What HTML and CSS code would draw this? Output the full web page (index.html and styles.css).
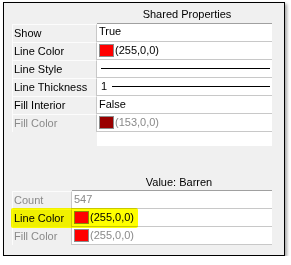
FILE: index.html
```html
<!DOCTYPE html>
<html lang="en">
<head>
    <meta charset="UTF-8">
    <title>Properties</title>
    <link rel="stylesheet" href="styles.css">
</head>
<body>
    <div class="window">
        <!-- shared properties grid -->
        <div class="grid grid-shared">
            <div class="blank"></div>
            <div class="head">Shared Properties</div>

            <div class="label">Show</div>
            <div class="value">True</div>

            <div class="label">Line Color</div>
            <div class="value"><span class="swatch red"></span>(255,0,0)</div>

            <div class="label">Line Style</div>
            <div class="value"><span class="line"></span></div>

            <div class="label">Line Thickness</div>
            <div class="value"><span class="num">1</span><span class="line"></span></div>

            <div class="label">Fill Interior</div>
            <div class="value">False</div>

            <div class="label dim">Fill Color</div>
            <div class="value dim"><span class="swatch dark"></span>(153,0,0)</div>

            <div class="blank"></div>
            <div class="rest"></div>
        </div>

        <!-- value grid -->
        <div class="grid grid-value">
            <div class="blank"></div>
            <div class="head">Value: Barren</div>

            <div class="label dim">Count</div>
            <div class="value dim">547</div>

            <div class="label">Line Color</div>
            <div class="value"><span class="swatch red"></span>(255,0,0)</div>

            <div class="label dim">Fill Color</div>
            <div class="value dim"><span class="swatch red"></span>(255,0,0)</div>

            <div class="mark"></div>
        </div>
    </div>
</body>
</html>
```

FILE: styles.css
```css
body {
    margin: 0;
    padding: 0;
    background-color: white;
    font-family: "Liberation Sans", Arial, sans-serif;
    font-size: 11px;
    color: #000;
}

.window {
    box-sizing: border-box;
    margin: 2px 0 0 3px;
    width: 282px;
    height: 254px;
    border: 1px solid #000;
    background-color: #f0f0f0;
    box-shadow: 2px 2px 3px rgba(0, 0, 0, 0.35);
    padding: 4px 0 0 8px;
}

.grid {
    display: grid;
    position: relative;
    width: 260px;
}

.grid-shared {
    grid-template-columns: 85px 175px;
    grid-template-rows: 17px repeat(6, 18px) 14px;
}

.grid-value {
    margin-top: 29px;
    grid-template-columns: 60px 200px;
    grid-template-rows: 16px repeat(3, 18px);
}

.head {
    box-sizing: border-box;
    border-bottom: 1px solid #a0a0a0;
    text-align: center;
    line-height: 15px;
}

.grid-shared .head {
    padding-left: 5px;
}

.grid-value .head {
    padding-left: 14px;
}

.label {
    box-sizing: border-box;
    border-top: 1px solid #fcfcfc;
    border-left: 1px solid #fcfcfc;
    border-right: 1px solid #c8c8c8;
    padding-left: 1px;
    line-height: 17px;
    white-space: nowrap;
}

.value {
    box-sizing: border-box;
    background-color: white;
    border-bottom: 1px solid #c8c8c8;
    padding-left: 2px;
    line-height: 15px;
    display: flex;
    align-items: center;
    white-space: nowrap;
}

.grid-shared .value:nth-child(4) {
    align-items: flex-start;
}

.dim {
    color: #8a8a8a;
}

.swatch {
    box-sizing: border-box;
    width: 15px;
    height: 13px;
    margin-right: 1px;
    border: 1px solid #8c8c8c;
}

.swatch.red {
    background-color: #ff0000;
}

.swatch.dark {
    background-color: #990000;
}

.line {
    flex: 1;
    height: 1px;
    margin: 0 2px 0 2px;
    background-color: #000;
}

.num {
    margin-left: 2px;
    margin-right: 3px;
}

.rest {
    background-color: white;
}

/* yellow marker over the Line Color row */
.mark {
    position: absolute;
    left: -1px;
    top: 33px;
    width: 127px;
    height: 20px;
    border-radius: 2px;
    background-color: #ffff00;
    mix-blend-mode: multiply;
}
```
